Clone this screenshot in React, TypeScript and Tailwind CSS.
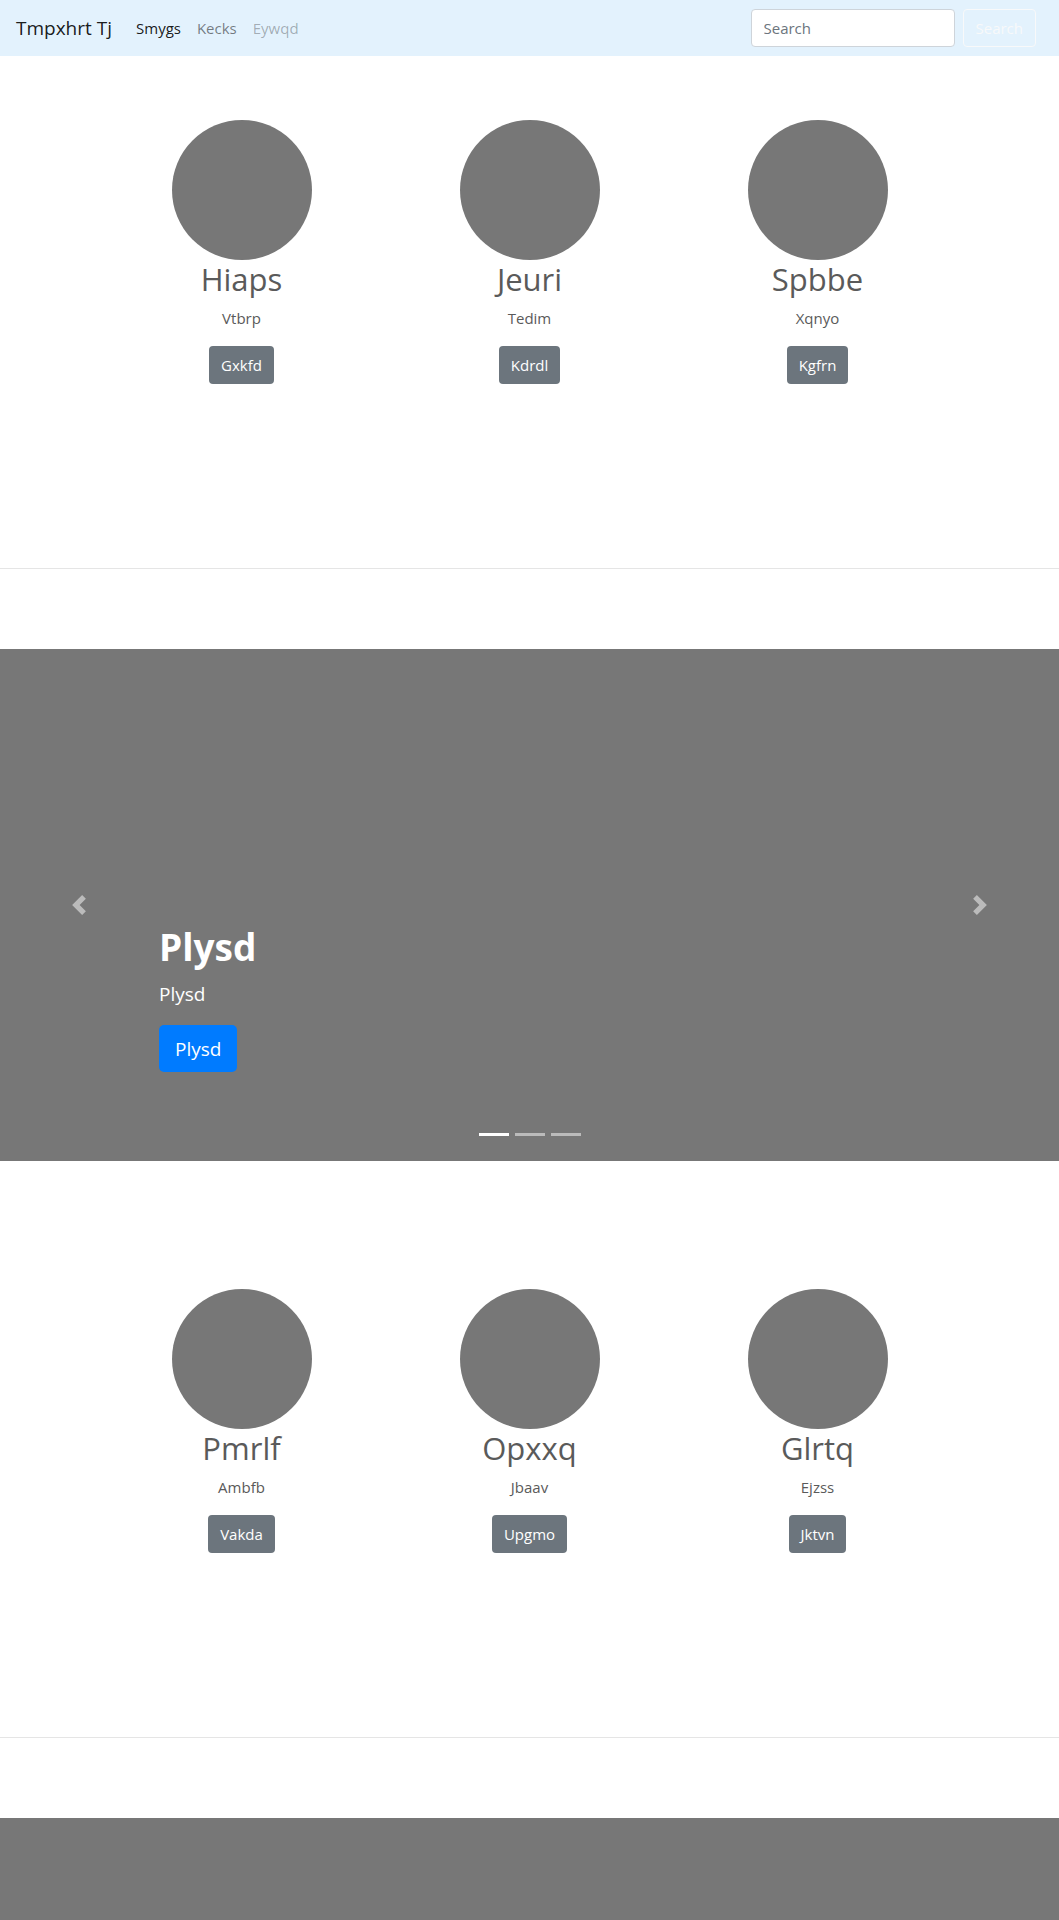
import React from "react";

const font = { fontFamily: '"Open Sans", "Noto Sans", "Liberation Sans", sans-serif' };

type Card = { title: string; sub: string; btn: string };

const row1: Card[] = [
  { title: "Hiaps", sub: "Vtbrp", btn: "Gxkfd" },
  { title: "Jeuri", sub: "Tedim", btn: "Kdrdl" },
  { title: "Spbbe", sub: "Xqnyo", btn: "Kgfrn" },
];
const row2: Card[] = [
  { title: "Pmrlf", sub: "Ambfb", btn: "Vakda" },
  { title: "Opxxq", sub: "Jbaav", btn: "Upgmo" },
  { title: "Glrtq", sub: "Ejzss", btn: "Jktvn" },
];

function Marketing({ cards, pt }: { cards: Card[]; pt: string }) {
  return (
    <section className={pt}>
      <div className="mx-auto grid w-[864px] grid-cols-3">
        {cards.map((c) => (
          <div key={c.title} className="flex flex-col items-center text-center">
            <div className="h-[140px] w-[140px] rounded-full bg-[#777777]" />
            <h2 className="mb-2 text-[31px] font-normal leading-[38px] text-[#5a5a5a]">{c.title}</h2>
            <p className="mb-4 text-[15px] leading-6 text-[#5a5a5a]">{c.sub}</p>
            <button className="h-[38px] rounded-[4px] bg-[#6c757d] px-3 text-[15px] leading-6 text-white">
              {c.btn}
            </button>
          </div>
        ))}
      </div>
    </section>
  );
}

function Carousel() {
  return (
    <div className="relative flex h-[512px] flex-col justify-end bg-[#777777] pb-[89px] pl-[159px]">
      <div className="relative z-10 text-white">
        <h1 className="mb-2 text-[37px] font-bold leading-[48px]">Plysd</h1>
        <p className="mb-4 text-[19px] leading-[30px]">Plysd</p>
        <button className="h-[47px] rounded-[5px] bg-[#007bff] px-4 text-[19px] leading-[30px] text-white">
          Plysd
        </button>
      </div>
      <div className="absolute left-0 top-0 flex h-full w-[15%] items-center justify-center opacity-50">
        <svg width="20" height="20" viewBox="0 0 8 8" fill="#fff">
          <path d="M5.25 0l-4 4 4 4 1.5-1.5L4.25 4l2.5-2.5L5.25 0z" />
        </svg>
      </div>
      <div className="absolute right-0 top-0 flex h-full w-[15%] items-center justify-center opacity-50">
        <svg width="20" height="20" viewBox="0 0 8 8" fill="#fff">
          <path d="M2.75 0l-1.5 1.5L3.75 4l-2.5 2.5L2.75 8l4-4-4-4z" />
        </svg>
      </div>
      <div className="absolute bottom-[25px] left-0 flex w-full justify-center gap-[6px]">
        <span className="h-[3px] w-[30px] bg-white" />
        <span className="h-[3px] w-[30px] bg-white opacity-50" />
        <span className="h-[3px] w-[30px] bg-white opacity-50" />
      </div>
    </div>
  );
}

export default function App() {
  return (
    <div style={font} className="min-h-[1920px] bg-white">
      <nav className="flex h-[56px] items-center bg-[#e3f2fd] pl-4 pr-[23px]">
        <span className="mr-4 text-[19px] leading-[30px] text-black/90">Tmpxhrt Tj</span>
        <div className="flex text-[15px] leading-6">
          <span className="px-2 text-black/90">Smygs</span>
          <span className="px-2 text-black/50">Kecks</span>
          <span className="px-2 text-black/30">Eywqd</span>
        </div>
        <div className="ml-auto flex items-center gap-2">
          <input
            placeholder="Search"
            className="h-[38px] w-[204px] rounded-[4px] border border-[#ced4da] bg-white px-3 text-[15px] text-[#495057] outline-none placeholder:text-[#6c757d]"
          />
          <button className="h-[38px] rounded-[4px] border border-[#f8f9fa] px-3 text-[15px] text-[#f8f9fa]">
            Search
          </button>
        </div>
      </nav>
      <Marketing cards={row1} pt="pt-[64px]" />
      <div className="mt-[184px] border-t border-[#e5e5e5]" />
      <div className="mt-[80px]">
        <Carousel />
      </div>
      <Marketing cards={row2} pt="pt-[128px]" />
      <div className="mt-[184px] border-t border-[#e5e5e5]" />
      <div className="mt-[80px]">
        <Carousel />
      </div>
    </div>
  );
}
